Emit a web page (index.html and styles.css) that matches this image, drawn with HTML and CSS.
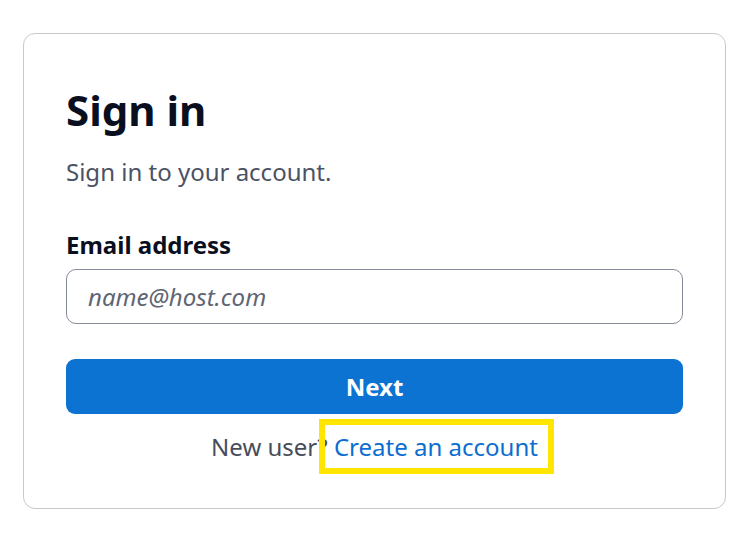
FILE: index.html
```html
<!DOCTYPE html>
<html lang="en">
<head>
<meta charset="utf-8">
<title>Sign in</title>
<link rel="stylesheet" href="styles.css">
</head>
<body>
<main class="card">
  <h1 class="title">Sign in</h1>
  <p class="subtitle">Sign in to your account.</p>
  <form class="form">
    <label class="label" for="email">Email address</label>
    <input class="input" id="email" type="email" placeholder="name@host.com">
    <button class="btn" type="button">Next</button>
  </form>
  <p class="signup">New user? <a class="link" href="#">Create an account<span class="highlight"></span></a></p>
</main>
</body>
</html>
```
FILE: styles.css
```css
* { box-sizing: border-box; }
html, body { margin: 0; background: #ffffff; }
body {
  padding: 33px 0 0 23px;
  font-family: "Noto Sans", "Open Sans", Arial, sans-serif;
  color: #0b1020;
}
.card {
  width: 703px;
  height: 476px;
  border: 1px solid #c9c9cc;
  border-radius: 12px;
  padding: 48px 42px 0 42px;
}
.title {
  margin: 0;
  font-size: 42px;
  line-height: 56px;
  font-weight: 700;
  color: #0a0f1f;
}
.subtitle {
  margin: 18px 0 0;
  font-size: 24px;
  line-height: 32px;
  color: #4b5263;
}
.form {
  display: flex;
  flex-direction: column;
  margin-top: 41px;
}
.label {
  font-size: 24px;
  line-height: 32px;
  font-weight: 700;
  color: #0a0f1f;
}
.input {
  margin-top: 8px;
  height: 55px;
  border: 1px solid #858b99;
  border-radius: 10px;
  padding: 0 21px;
  font-family: inherit;
  font-size: 24px;
  color: #0a0f1f;
  outline: none;
}
.input::placeholder {
  font-style: italic;
  color: #5f6573;
}
.btn {
  margin-top: 35px;
  height: 55px;
  border: 0;
  border-radius: 9px;
  background: #0c73d3;
  color: #ffffff;
  font-family: inherit;
  font-size: 24px;
  font-weight: 700;
}
.signup {
  margin: 17px 0 0;
  text-align: center;
  font-size: 24px;
  line-height: 32px;
  color: #474d5b;
}
.link {
  position: relative;
  color: #0c6ed0;
  text-decoration: none;
}
.highlight {
  position: absolute;
  left: -15px;
  right: -16px;
  top: -11px;
  bottom: -11px;
  border: 6px solid #ffe500;
  pointer-events: none;
}
```
